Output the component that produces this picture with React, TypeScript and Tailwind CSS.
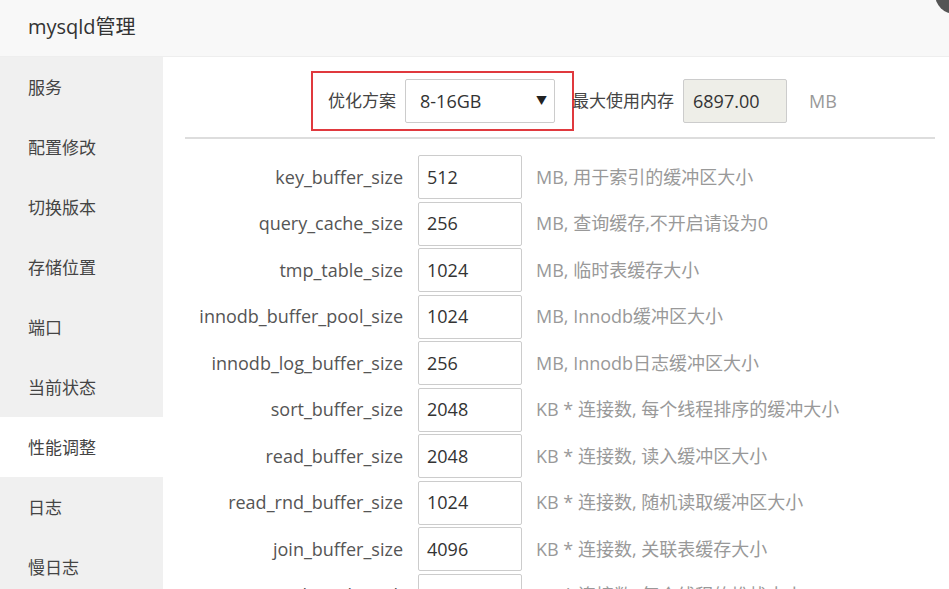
const menu = ['服务', '配置修改', '切换版本', '存储位置', '端口', '当前状态', '性能调整', '日志', '慢日志'];

const params = [
  { name: 'key_buffer_size', value: '512', hint: 'MB, 用于索引的缓冲区大小' },
  { name: 'query_cache_size', value: '256', hint: 'MB, 查询缓存,不开启请设为0' },
  { name: 'tmp_table_size', value: '1024', hint: 'MB, 临时表缓存大小' },
  { name: 'innodb_buffer_pool_size', value: '1024', hint: 'MB, Innodb缓冲区大小' },
  { name: 'innodb_log_buffer_size', value: '256', hint: 'MB, Innodb日志缓冲区大小' },
  { name: 'sort_buffer_size', value: '2048', hint: 'KB * 连接数, 每个线程排序的缓冲大小' },
  { name: 'read_buffer_size', value: '2048', hint: 'KB * 连接数, 读入缓冲区大小' },
  { name: 'read_rnd_buffer_size', value: '1024', hint: 'KB * 连接数, 随机读取缓冲区大小' },
  { name: 'join_buffer_size', value: '4096', hint: 'KB * 连接数, 关联表缓存大小' },
  { name: 'thread_stack', value: '512', hint: 'KB * 连接数, 每个线程的堆栈大小' },
];

export default function App() {
  const active = '性能调整';

  return (
    <div
      className="relative w-[949px] h-[589px] overflow-hidden bg-white text-[#333]"
      style={{ fontFamily: '"Open Sans", "Noto Sans CJK SC", sans-serif' }}
    >
      {/* close button peeking from the corner */}
      <div className="absolute -right-[26px] -top-[26px] w-[40px] h-[40px] rounded-full bg-[#555]" />

      <div className="h-[57px] bg-[#f8f8f8] border-b border-[#eee] flex items-center pl-[28px] pb-[3px] text-[20px]">
        mysqld管理
      </div>

      <div className="flex">
        <div className="w-[163px] shrink-0 bg-[#f0f0f0] h-[532px]">
          {menu.map((m) => (
            <div
              key={m}
              className={`h-[60px] flex items-center pl-[28px] pt-[2px] text-[17px] text-[#444] ${
                m === active ? 'bg-white' : ''
              }`}
            >
              {m}
            </div>
          ))}
        </div>

        <div className="flex-1 pl-[22px] pr-[14px]">
          <div className="h-[82px] flex items-start pt-[14px] pl-[126px] border-b-2 border-[#ddd]">
            <div className="flex items-center h-[60px] border-2 border-[#e0393e] pl-[15px] pr-[17px]">
              <span className="text-[17px] text-[#444] mr-[9px]">优化方案</span>
              <div className="w-[150px] h-[44px] border border-[#ccc] rounded-[2px] flex items-center justify-between pl-[14px] pr-[7px] text-[18px]">
                <span>8-16GB</span>
                <span className="text-[11px] text-[#222]">▼</span>
              </div>
            </div>
            <div className="flex items-center h-[60px]">
              <span className="text-[17px] text-[#444] ml-[-2px] mr-[9px]">最大使用内存</span>
              <div className="w-[104px] h-[44px] border border-[#ccc] rounded-[2px] bg-[#eeeee8] flex items-center pl-[9px] text-[18px]">
                6897.00
              </div>
              <span className="ml-[22px] text-[18px] text-[#999]">MB</span>
            </div>
          </div>

          <div className="pt-[15px]">
            {params.map((p) => (
              <div key={p.name} className="h-[46.5px] flex items-center">
                <div className="w-[233px] text-right text-[18px] text-[#555] pr-[15px]">{p.name}</div>
                <div className="w-[104px] h-[44px] border border-[#ccc] rounded-[2px] flex items-center pl-[8px] text-[18px]">
                  {p.value}
                </div>
                <div className="ml-[14px] text-[18px] text-[#999]">{p.hint}</div>
              </div>
            ))}
          </div>
        </div>
      </div>
    </div>
  );
}
